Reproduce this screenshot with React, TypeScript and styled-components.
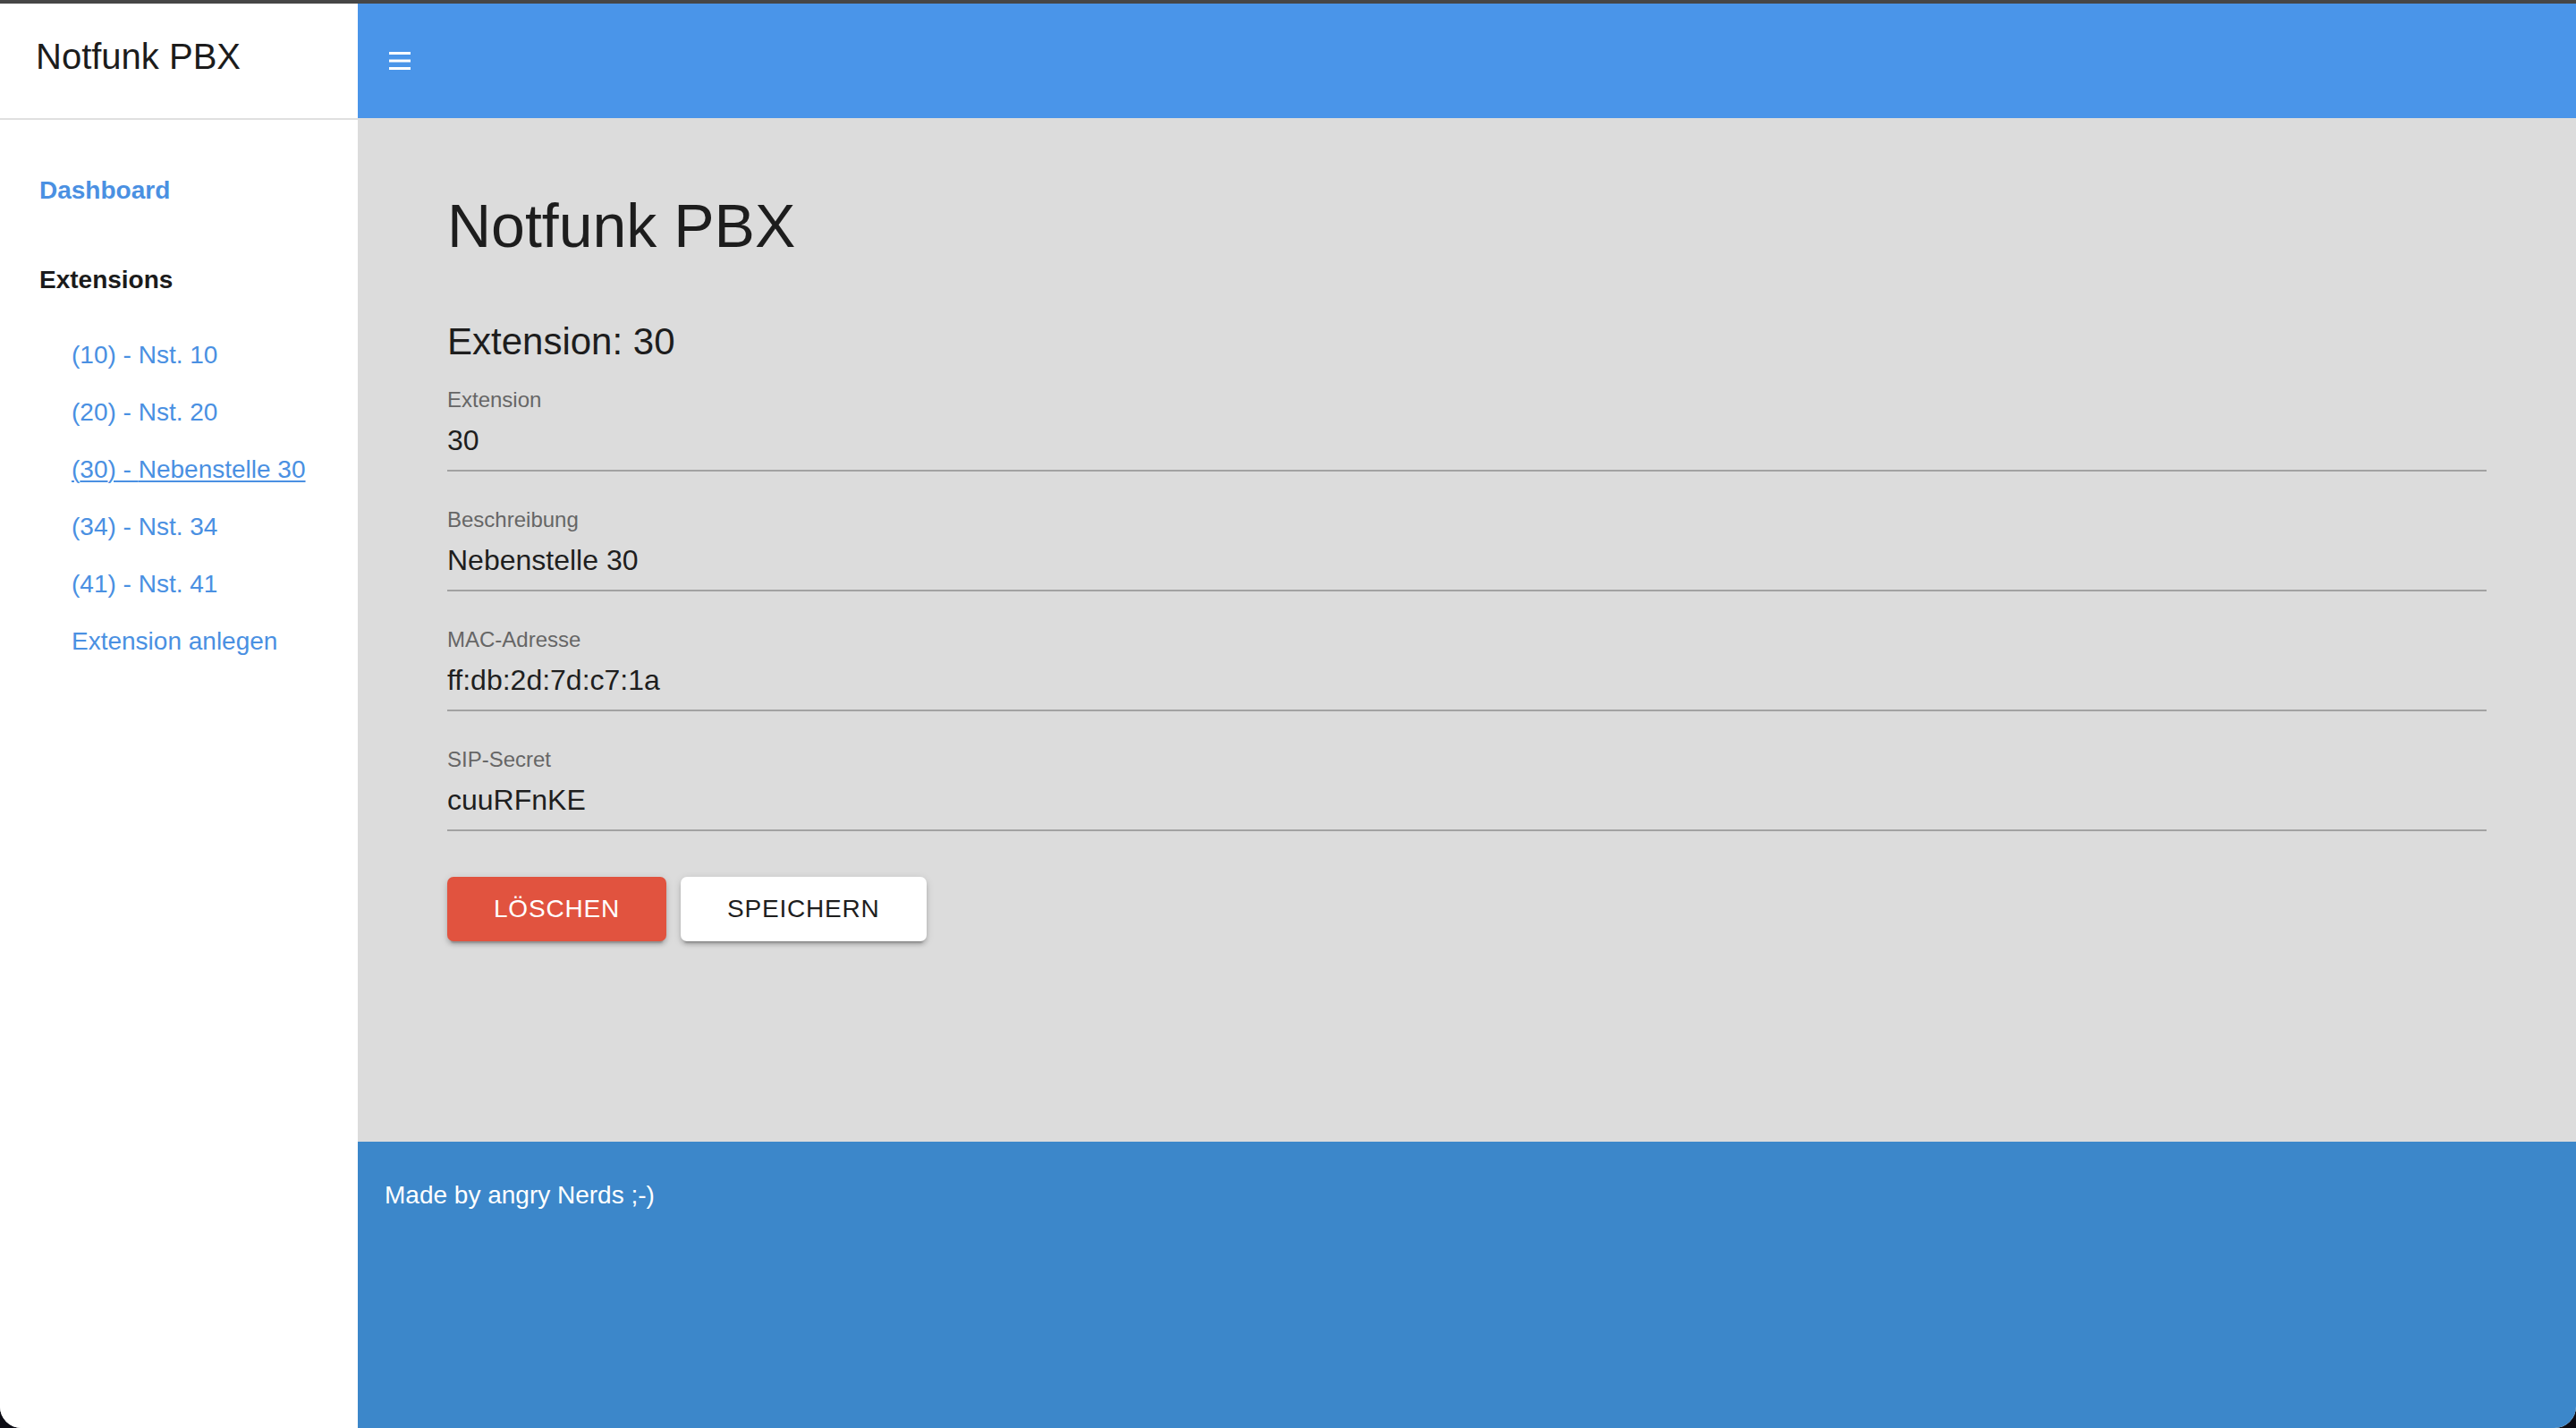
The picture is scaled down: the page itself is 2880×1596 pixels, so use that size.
import React from "react";
import styled, { createGlobalStyle } from "styled-components";

const GlobalStyle = createGlobalStyle`
  html, body {
    margin: 0;
    padding: 0;
    background: #0c0c14;
  }
  body {
    font-family: "Liberation Sans", Arial, Helvetica, sans-serif;
  }
  * {
    box-sizing: border-box;
  }
`;

interface Extension {
  number: string;
  name: string;
}

const extensions: Extension[] = [
  { number: "10", name: "Nst. 10" },
  { number: "20", name: "Nst. 20" },
  { number: "30", name: "Nebenstelle 30" },
  { number: "34", name: "Nst. 34" },
  { number: "41", name: "Nst. 41" },
];

const fields = [
  { label: "Extension", value: "30" },
  { label: "Beschreibung", value: "Nebenstelle 30" },
  { label: "MAC-Adresse", value: "ff:db:2d:7d:c7:1a" },
  { label: "SIP-Secret", value: "cuuRFnKE" },
];

export default function App() {
  const selected = "30";

  return (
    <>
      <GlobalStyle />
      <Window>
        <Sidebar>
          <Brand>Notfunk PBX</Brand>
          <Nav>
            <DashboardLink href="#">Dashboard</DashboardLink>
            <SectionTitle>Extensions</SectionTitle>
            <ExtensionList>
              {extensions.map((ext) => (
                <li key={ext.number}>
                  <ExtensionLink href="#" active={ext.number === selected}>
                    ({ext.number}) - {ext.name}
                  </ExtensionLink>
                </li>
              ))}
              <li>
                <ExtensionLink href="#" active={false}>
                  Extension anlegen
                </ExtensionLink>
              </li>
            </ExtensionList>
          </Nav>
        </Sidebar>

        <Content>
          <AppBar>
            <MenuButton aria-label="Menü">
              <svg width="24" height="20" viewBox="0 0 24 20">
                <rect x="0" y="0" width="24" height="3" fill="#fff" />
                <rect x="0" y="8.5" width="24" height="3" fill="#fff" />
                <rect x="0" y="17" width="24" height="3" fill="#fff" />
              </svg>
            </MenuButton>
          </AppBar>

          <Main>
            <PageTitle>Notfunk PBX</PageTitle>
            <SubTitle>Extension: {selected}</SubTitle>
            <Form>
              {fields.map((f) => (
                <Field key={f.label}>
                  <FieldLabel>{f.label}</FieldLabel>
                  <FieldValue>{f.value}</FieldValue>
                </Field>
              ))}
            </Form>
            <Actions>
              <Button variant="danger">Löschen</Button>
              <Button variant="plain">Speichern</Button>
            </Actions>
          </Main>

          <Footer>Made by angry Nerds ;-)</Footer>
        </Content>
      </Window>
    </>
  );
}

const Window = styled.div`
  display: grid;
  grid-template-columns: 400px 1fr;
  min-height: 100vh;
  border-top: 4px solid #464646;
  border-radius: 0 0 24px 24px;
  overflow: hidden;
  background: #fff;
`;

const Sidebar = styled.aside`
  background: #fff;
  display: flex;
  flex-direction: column;
`;

const Brand = styled.div`
  height: 130px;
  padding: 35px 0 0 40px;
  font-size: 40px;
  line-height: 48px;
  color: #1c1c1c;
  border-bottom: 2px solid #e0e0e0;
`;

const Nav = styled.nav`
  padding: 59px 0 0 44px;
  display: flex;
  flex-direction: column;
`;

const DashboardLink = styled.a`
  font-size: 28px;
  line-height: 40px;
  font-weight: 700;
  color: #4a90e2;
  text-decoration: none;
`;

const SectionTitle = styled.div`
  margin-top: 60px;
  font-size: 28px;
  line-height: 40px;
  font-weight: 700;
  color: #1b1b1b;
`;

const ExtensionList = styled.ul`
  list-style: none;
  margin: 32px 0 0;
  padding: 0 0 0 36px;

  li {
    font-size: 28px;
    line-height: 64px;
  }
`;

const ExtensionLink = styled.a<{ active: boolean }>`
  font-size: 28px;
  color: #4a90e2;
  text-decoration: ${({ active }) => (active ? "underline" : "none")};
  text-underline-offset: 3px;
  text-decoration-thickness: 2px;
`;

const Content = styled.div`
  display: flex;
  flex-direction: column;
  min-width: 0;
`;

const AppBar = styled.header`
  height: 128px;
  background: #4a95e9;
  display: flex;
  align-items: center;
  padding-left: 35px;
`;

const MenuButton = styled.button`
  background: none;
  border: 0;
  padding: 0;
  display: flex;
  cursor: pointer;
`;

const Main = styled.main`
  min-height: 1144px;
  background: #dcdcdc;
  padding: 78px 100px 0;
`;

const PageTitle = styled.h1`
  margin: 0;
  font-size: 68px;
  line-height: 84px;
  font-weight: 400;
  color: #1d1d1d;
`;

const SubTitle = styled.h2`
  margin: 60px 0 0;
  font-size: 42px;
  line-height: 56px;
  font-weight: 400;
  color: #1d1d1d;
`;

const Form = styled.div`
  margin-top: 23px;
  display: flex;
  flex-direction: column;
  gap: 40px;
`;

const Field = styled.div`
  display: flex;
  flex-direction: column;
`;

const FieldLabel = styled.label`
  font-size: 24px;
  line-height: 28px;
  color: #666;
`;

const FieldValue = styled.div`
  padding: 8px 0 10px;
  font-size: 32px;
  line-height: 46px;
  color: #1e1e1e;
  border-bottom: 2px solid #a2a2a2;
`;

const Actions = styled.div`
  margin-top: 51px;
  display: flex;
  gap: 16px;
`;

const Button = styled.button<{ variant: "danger" | "plain" }>`
  height: 72px;
  padding: 0 52px;
  border: 0;
  border-radius: 7px;
  font-family: inherit;
  font-size: 28px;
  letter-spacing: 0.8px;
  text-transform: uppercase;
  cursor: pointer;
  background: ${({ variant }) => (variant === "danger" ? "#e1533f" : "#fff")};
  color: ${({ variant }) => (variant === "danger" ? "#fff" : "#1e1e1e")};
  box-shadow: 0 6px 2px -4px rgba(0, 0, 0, 0.2), 0 4px 4px 0 rgba(0, 0, 0, 0.14),
    0 2px 10px 0 rgba(0, 0, 0, 0.12);
`;

const Footer = styled.footer`
  flex: 1;
  background: #3c87ca;
  padding: 39px 30px;
  font-size: 28px;
  line-height: 42px;
  color: #fff;
`;
